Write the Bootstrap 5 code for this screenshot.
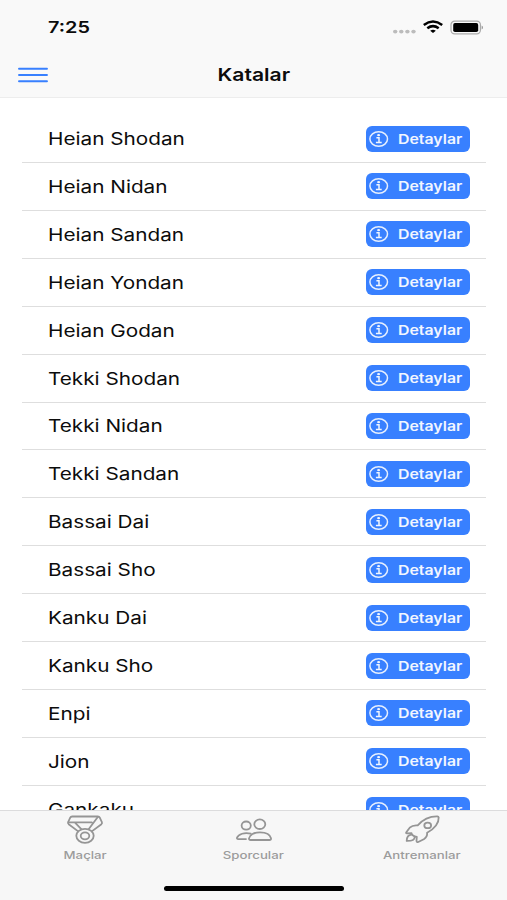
<!DOCTYPE html>
<html lang="tr">
<head>
<meta charset="utf-8">
<meta name="viewport" content="width=device-width, initial-scale=1">
<title>Katalar</title>
<link href="https://cdn.jsdelivr.net/npm/bootstrap@5.3.0/dist/css/bootstrap.min.css" rel="stylesheet">
<style>
  body { font-family: Inter, "Liberation Sans", sans-serif; color: #0c0c0c; background: #fff; }
  svg { display: block; }
  .screen { height: 900px; width: 507px; }
  .wide { display: inline-block; white-space: nowrap; transform: scaleX(1.22); transform-origin: left center; }
  .mid { transform-origin: center; }
  .top-area { height: 98px; background: #f9f9f9; border-bottom: 1px solid #ededed; }
  .status { height: 54px; padding: 0 24px 0 48px; }
  .clock { font-size: 16.3px; font-weight: 600; padding-top: 1px; }
  .title-bar { height: 42px; padding: 0 18px; }
  .title-side { width: 30px; }
  .page-title { font-size: 17.3px; font-weight: 600; }
  .katas { padding: 17.1px 21px 0 22px; }
  .kata { height: 47.92px; padding: 0 16px 0 26px; border: 0; border-bottom: 2px solid #dedede; background: none; }
  .kata-name { font-size: 17.3px; line-height: 24px; color: #0c0c0c; transform: scaleX(1.2); padding-top: 1px; }
  .detail { width: 104px; height: 26px; padding: 0 0 0 3px; border: 0; border-radius: 6px; background: #3880ff; color: #fff; }
  .detail:hover { background: #3171e0; color: #fff; }
  .detail .wide { margin-left: 9px; font-size: 13px; font-weight: 600; line-height: 20px; color: #f1f6ff; }
  .tabs { height: 90px; background: #f7f7f7; border-top: 1px solid #dcdcdd; }
  .tab { width: 168.5px; color: #959595; }
  .tab .wide { font-size: 10.5px; font-weight: 500; line-height: 14px; margin-top: 4px; color: #9c9c9c; transform: scaleX(1.26); }
  .tab svg { margin-top: 4px; }
  .home-bar { width: 180px; height: 5px; margin-bottom: 9px; background: #000; }
</style>
<script src="https://cdn.jsdelivr.net/npm/bootstrap@5.3.0/dist/js/bootstrap.bundle.min.js"></script>
</head>
<body>
<svg width="0" height="0" class="position-absolute">
  <symbol id="info" viewBox="0 0 20 18">
    <ellipse cx="9.700" cy="9" rx="8.800" ry="7.200" fill="none" stroke="#e6efff" stroke-width="1.500"/>
    <path d="M7.400 7.800h2.600v4.400M6.900 12.400h5.800" fill="none" stroke="#f1f6ff" stroke-width="1.500"/>
    <ellipse cx="9.600" cy="5.200" rx="1.500" ry="1.150" fill="#f1f6ff"/>
  </symbol>
</svg>
<div class="screen d-flex flex-column overflow-hidden">
  <header class="top-area flex-shrink-0">
    <div class="status d-flex align-items-center justify-content-between">
      <span class="clock wide">7:25</span>
      <svg width="92" height="18" viewBox="0 0 92 18">
        <g fill="#bcbcbc"><ellipse cx="4.200" cy="13.600" rx="2.200" ry="1.900"/><ellipse cx="10.300" cy="13.600" rx="2.200" ry="1.900"/><ellipse cx="16.400" cy="13.600" rx="2.200" ry="1.900"/><ellipse cx="22.500" cy="13.600" rx="2.200" ry="1.900"/></g>
        <g fill="none" stroke="#000" stroke-width="2.500">
          <path d="M32.800 6.900Q42 .2 51.200 6.900"/><path d="M36.300 10.300Q42 6 47.700 10.300"/>
        </g>
        <path d="M39.200 12.700Q42 10.800 44.800 12.700L42 15.100Z"/>
        <rect x="60" y="3.200" width="29.400" height="12.600" rx="3.600" fill="none" stroke="#aaa" stroke-width="1.200"/>
        <rect x="62.200" y="5.100" width="25" height="8.900" rx="1.800"/>
        <path d="M90.600 7.500v4q1.400-.5 1.400-2t-1.400-2" fill="#999"/>
      </svg>
    </div>
    <div class="title-bar d-flex align-items-center justify-content-between">
      <svg class="title-side" width="30" height="18" viewBox="0 0 30 18" stroke="#3880ff" stroke-width="1.900" stroke-linecap="round"><path d="M1 2.700h28M1 9h28M1 15.300h28"/></svg>
      <h1 class="page-title wide mid m-0">Katalar</h1>
      <span class="title-side"></span>
    </div>
  </header>
  <main class="flex-grow-1 overflow-hidden">
    <ul class="katas list-group list-group-flush m-0">
      <li class="kata list-group-item d-flex align-items-center justify-content-between flex-shrink-0"><span class="kata-name wide">Heian Shodan</span><button class="detail btn d-flex align-items-center"><svg width="20" height="18"><use href="#info"/></svg><span class="wide">Detaylar</span></button></li>
      <li class="kata list-group-item d-flex align-items-center justify-content-between flex-shrink-0"><span class="kata-name wide">Heian Nidan</span><button class="detail btn d-flex align-items-center"><svg width="20" height="18"><use href="#info"/></svg><span class="wide">Detaylar</span></button></li>
      <li class="kata list-group-item d-flex align-items-center justify-content-between flex-shrink-0"><span class="kata-name wide">Heian Sandan</span><button class="detail btn d-flex align-items-center"><svg width="20" height="18"><use href="#info"/></svg><span class="wide">Detaylar</span></button></li>
      <li class="kata list-group-item d-flex align-items-center justify-content-between flex-shrink-0"><span class="kata-name wide">Heian Yondan</span><button class="detail btn d-flex align-items-center"><svg width="20" height="18"><use href="#info"/></svg><span class="wide">Detaylar</span></button></li>
      <li class="kata list-group-item d-flex align-items-center justify-content-between flex-shrink-0"><span class="kata-name wide">Heian Godan</span><button class="detail btn d-flex align-items-center"><svg width="20" height="18"><use href="#info"/></svg><span class="wide">Detaylar</span></button></li>
      <li class="kata list-group-item d-flex align-items-center justify-content-between flex-shrink-0"><span class="kata-name wide">Tekki Shodan</span><button class="detail btn d-flex align-items-center"><svg width="20" height="18"><use href="#info"/></svg><span class="wide">Detaylar</span></button></li>
      <li class="kata list-group-item d-flex align-items-center justify-content-between flex-shrink-0"><span class="kata-name wide">Tekki Nidan</span><button class="detail btn d-flex align-items-center"><svg width="20" height="18"><use href="#info"/></svg><span class="wide">Detaylar</span></button></li>
      <li class="kata list-group-item d-flex align-items-center justify-content-between flex-shrink-0"><span class="kata-name wide">Tekki Sandan</span><button class="detail btn d-flex align-items-center"><svg width="20" height="18"><use href="#info"/></svg><span class="wide">Detaylar</span></button></li>
      <li class="kata list-group-item d-flex align-items-center justify-content-between flex-shrink-0"><span class="kata-name wide">Bassai Dai</span><button class="detail btn d-flex align-items-center"><svg width="20" height="18"><use href="#info"/></svg><span class="wide">Detaylar</span></button></li>
      <li class="kata list-group-item d-flex align-items-center justify-content-between flex-shrink-0"><span class="kata-name wide">Bassai Sho</span><button class="detail btn d-flex align-items-center"><svg width="20" height="18"><use href="#info"/></svg><span class="wide">Detaylar</span></button></li>
      <li class="kata list-group-item d-flex align-items-center justify-content-between flex-shrink-0"><span class="kata-name wide">Kanku Dai</span><button class="detail btn d-flex align-items-center"><svg width="20" height="18"><use href="#info"/></svg><span class="wide">Detaylar</span></button></li>
      <li class="kata list-group-item d-flex align-items-center justify-content-between flex-shrink-0"><span class="kata-name wide">Kanku Sho</span><button class="detail btn d-flex align-items-center"><svg width="20" height="18"><use href="#info"/></svg><span class="wide">Detaylar</span></button></li>
      <li class="kata list-group-item d-flex align-items-center justify-content-between flex-shrink-0"><span class="kata-name wide">Enpi</span><button class="detail btn d-flex align-items-center"><svg width="20" height="18"><use href="#info"/></svg><span class="wide">Detaylar</span></button></li>
      <li class="kata list-group-item d-flex align-items-center justify-content-between flex-shrink-0"><span class="kata-name wide">Jion</span><button class="detail btn d-flex align-items-center"><svg width="20" height="18"><use href="#info"/></svg><span class="wide">Detaylar</span></button></li>
      <li class="kata list-group-item d-flex align-items-center justify-content-between flex-shrink-0"><span class="kata-name wide">Gankaku</span><button class="detail btn d-flex align-items-center"><svg width="20" height="18"><use href="#info"/></svg><span class="wide">Detaylar</span></button></li>
    </ul>
  </main>
  <footer class="tabs flex-shrink-0 d-flex flex-column align-items-center justify-content-between">
    <nav class="d-flex justify-content-center">
      <div class="tab d-flex flex-column align-items-center">
        <svg width="38" height="30" viewBox="0 0 38 30" fill="none" stroke="currentColor" stroke-width="1.800" stroke-linejoin="round" stroke-linecap="round">
          <path d="M12.200 16.400L2.700 9.200Q1.600 8.200 2.200 7L4.200 2.600Q4.700 1.500 6.200 1.500H31.800Q33.300 1.500 33.800 2.600L35.800 7Q36.500 8.200 35.400 9.200L25.800 16.400"/>
          <path d="M2.500 7.300H25.800M9 7.700L15.300 14.200M31.800 2L22.600 14.200"/>
          <ellipse cx="19" cy="20.800" rx="8.700" ry="7"/><ellipse cx="19" cy="20.800" rx="4.300" ry="3.500"/>
        </svg>
        <span class="wide mid">Maçlar</span>
      </div>
      <div class="tab d-flex flex-column align-items-center">
        <svg width="38" height="30" viewBox="0 0 38 30" fill="none" stroke="currentColor" stroke-width="1.800" stroke-linejoin="round" stroke-linecap="round">
          <ellipse cx="24.800" cy="9.200" rx="5.500" ry="4.800"/>
          <path d="M25 17.300C19 17.300 14.600 20 14 23.300Q13.900 25 15.600 25H34.400Q36.300 25 36 23.300C35.200 19.700 31 17.300 25 17.300Z"/>
          <ellipse cx="11.200" cy="10.600" rx="4.600" ry="4.100"/>
          <path d="M15.800 18.700C9.500 16.900 3.500 19.300 2 22.600Q1.700 24.100 3.200 24.100H11"/>
        </svg>
        <span class="wide mid">Sporcular</span>
      </div>
      <div class="tab d-flex flex-column align-items-center">
        <svg width="38" height="30" viewBox="0 0 38 30" fill="none" stroke="currentColor" stroke-width="1.800" stroke-linejoin="round" stroke-linecap="round">
          <path d="M35.700 2.400C35.500 1.700 35.200 1.500 34.300 1.400C26.500 1.300 19.400 5 14.700 10.400C10.500 9.900 8.300 11.200 6.700 12.700L3.300 17.200Q2.500 18.300 4 18.400L8.500 18.100Q8.700 20.800 13.800 22L13.500 26Q13.700 27.500 15.200 27L20.800 24.200C22.900 22.800 24.500 21 24.100 17.800C30.900 14 35.900 8.400 35.700 2.400Z"/>
          <ellipse cx="24.700" cy="10.400" rx="3.400" ry="2.800"/>
          <path d="M8.500 19.700C5.500 20 3.700 22.200 3.700 25.900C8.200 26 11.500 25.200 11.700 22.200"/>
        </svg>
        <span class="wide mid">Antremanlar</span>
      </div>
    </nav>
    <div class="home-bar rounded-pill"></div>
  </footer>
</div>
</body>
</html>
